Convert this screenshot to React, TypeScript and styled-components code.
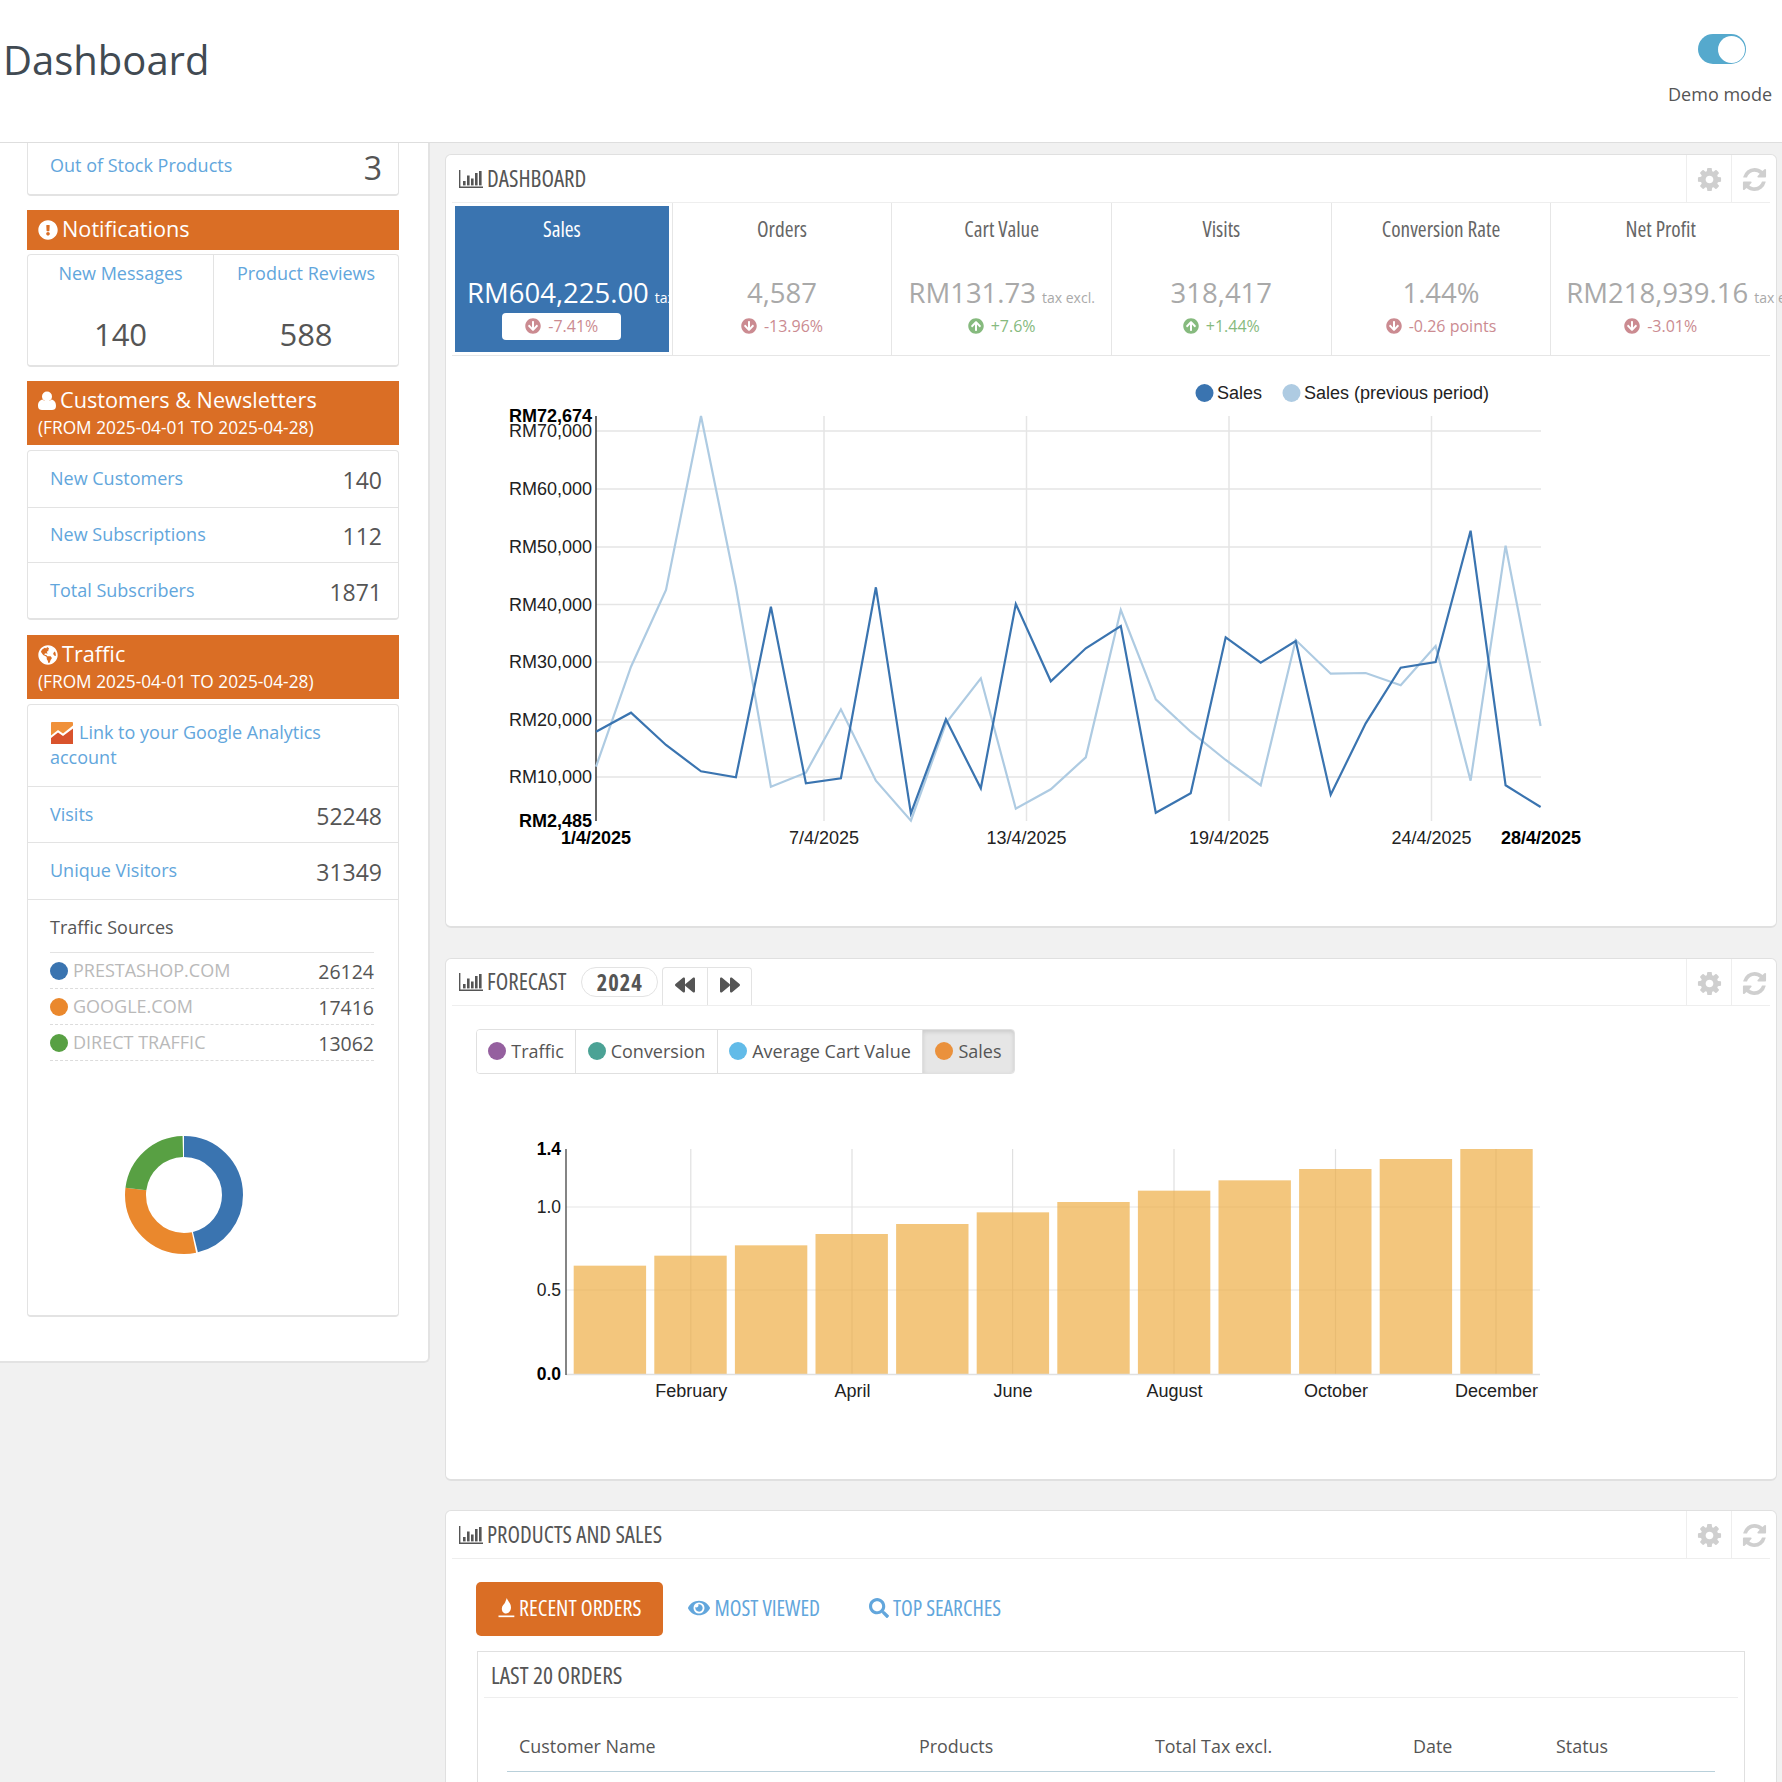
import React from 'react';
import styled, { createGlobalStyle } from 'styled-components';
import {
  FaArrowCircleDown,
  FaArrowCircleUp,
  FaBackward,
  FaExclamationCircle,
  FaEye,
  FaForward,
  FaGlobeAmericas,
  FaSearch,
} from 'react-icons/fa';

const orange = '#da6e25';
const link = '#62a6dc';
const sans = '"Open Sans", "Liberation Sans", sans-serif';
const arial = '"Liberation Sans", Arial, sans-serif';

const GlobalStyle = createGlobalStyle`
  html, body {
    margin: 0;
    padding: 0;
    height: 1782px;
    overflow: hidden;
    background: #f1f1f1;
    font-family: ${sans};
    color: #555;
  }
  * { box-sizing: border-box; }
`;

const Page = styled.div`
  width: 1782px;
  height: 1782px;
  overflow: hidden;
  display: flex;
  flex-direction: column;
`;

const Header = styled.header`
  height: 143px;
  flex: none;
  background: #fff;
  border-bottom: 1px solid #dedede;
  display: flex;
  justify-content: space-between;
  padding: 0 10px 0 3px;
`;

const Title = styled.h1`
  margin: 36px 0 0;
  font-size: 40px;
  font-weight: 400;
  line-height: 48px;
  color: #414a52;
`;

const DemoBox = styled.div`
  padding-top: 34px;
  display: flex;
  flex-direction: column;
  align-items: center;
`;

const Toggle = styled.div`
  width: 48px;
  height: 30px;
  margin-left: 4px;
  border-radius: 15px;
  background: #55a9cd;
  display: flex;
  justify-content: flex-end;
  align-items: center;
  padding-right: 1px;
  &::after {
    content: '';
    width: 27px;
    height: 27px;
    border-radius: 50%;
    background: #fff;
  }
`;

const DemoLabel = styled.div`
  margin-top: 18px;
  font-size: 18px;
  line-height: 24px;
  color: #555;
`;

const Body = styled.div`
  flex: 1;
  display: flex;
  align-items: flex-start;
  min-height: 0;
`;

const Sidebar = styled.aside`
  width: 430px;
  flex: none;
  background: #fff;
  border-right: 2px solid #e3e3e3;
  border-bottom: 2px solid #e3e3e3;
  border-bottom-right-radius: 6px;
  padding: 0 29px 44px 27px;
`;

const Card = styled.div`
  background: #fff;
  border: 1px solid #e3e3e3;
  border-bottom-width: 2px;
  border-radius: 4px;
`;

const TopCard = styled(Card)`
  border-top: 0;
  border-top-left-radius: 0;
  border-top-right-radius: 0;
  padding-bottom: 5px;
`;

const Row = styled.div<{ $h: number }>`
  height: ${p => p.$h}px;
  padding: 2px 16px 0 22px;
  display: flex;
  justify-content: space-between;
  align-items: center;
  & + & {
    border-top: 1px solid #e3e3e3;
  }
`;

const RowLink = styled.a`
  font-size: 18px;
  color: ${link};
  margin-top: -4px;
`;

const RowValue = styled.span<{ $big?: boolean }>`
  font-size: ${p => (p.$big ? 32 : 23)}px;
  color: #555;
`;

const Banner = styled.div<{ $gapTop: number; $gapBottom: number }>`
  margin-top: ${p => p.$gapTop}px;
  margin-bottom: ${p => p.$gapBottom}px;
  background: ${orange};
  color: #fff;
  padding: 0 11px;
  min-height: 40px;
  font-size: 21.7px;
  line-height: 37px;
  display: flow-root;
  svg {
    width: 20px;
    height: 20px;
    vertical-align: -3px;
    margin-right: 4px;
  }
`;

const UserGlyph = styled.svg`
  && {
    width: 18px;
    margin-right: 4px;
  }
`;

const BannerSub = styled.div`
  margin-top: -2px;
  font-size: 17.3px;
  line-height: 24px;
  padding-bottom: 5px;
`;

const Split = styled.div`
  display: grid;
  grid-template-columns: 1fr 1fr;
  height: 110px;
`;

const SplitCell = styled.div`
  text-align: center;
  & + & {
    border-left: 1px solid #e3e3e3;
  }
`;

const SplitLabel = styled.div`
  margin-top: 6px;
  font-size: 18px;
  line-height: 24px;
  color: ${link};
`;

const SplitValue = styled.div`
  margin-top: 27px;
  font-size: 31px;
  line-height: 44px;
  color: #555;
`;

const AnalyticsRow = styled.div`
  padding: 15px 22px 0;
  height: 82px;
  border-bottom: 1px solid #e3e3e3;
  font-size: 18px;
  line-height: 25px;
  color: ${link};
  svg {
    vertical-align: -5px;
    margin: 0 6px 0 1px;
  }
`;

const Sources = styled.div`
  padding: 15px 24px 0 22px;
  border-top: 1px solid #e3e3e3;
`;

const SourcesTitle = styled.div`
  font-size: 18px;
  line-height: 24px;
  padding-bottom: 13px;
  color: #555;
  border-bottom: 1px solid #e3e3e3;
`;

const Source = styled.div`
  height: 36px;
  display: flex;
  align-items: center;
  border-bottom: 1px dashed #dcdcdc;
`;

const Dot = styled.span<{ $c: string }>`
  width: 18px;
  height: 18px;
  flex: none;
  border-radius: 50%;
  background: ${p => p.$c};
`;

const SourceName = styled.span`
  margin: -2px 0 0 5px;
  font-size: 18px;
  color: #b9b9b9;
  flex: 1;
`;

const SourceValue = styled.span`
  font-size: 19.5px;
  color: #555;
  padding-top: 2px;
`;

const Donut = styled.svg`
  display: block;
  margin: 74px 0 60px 74px;
`;

const Main = styled.main`
  flex: 1;
  min-width: 0;
  padding: 11px 5px 0 15px;
  display: flex;
  flex-direction: column;
`;

const Panel = styled.section<{ $h: number; $mb: number }>`
  flex: none;
  height: ${p => p.$h}px;
  margin-bottom: ${p => p.$mb}px;
  background: #fff;
  border: 1px solid #e0e0e0;
  border-bottom-width: 2px;
  border-radius: 6px;
  padding: 0 6px;
`;

const PanelHead = styled.div<{ $h: number }>`
  height: ${p => p.$h}px;
  border-bottom: 1px solid #eee;
  display: flex;
  align-items: stretch;
  justify-content: space-between;
`;

const HeadLeft = styled.div`
  display: flex;
  align-items: center;
  padding-left: 7px;
`;

// the reference uses a condensed face; Open Sans narrowed by its width axis stands in
const Cond = styled.span<{ $size?: number; $w?: number }>`
  font-family: ${sans};
  font-size: ${p => p.$size ?? 23}px;
  font-stretch: 75%;
  font-weight: ${p => p.$w ?? 400};
`;

const PanelTitle = styled(Cond)`
  margin: -2px 0 0 4px;
  color: #555;
  text-transform: uppercase;
`;

const YearPill = styled(Cond)`
  margin-left: 15px;
  width: 77px;
  height: 30px;
  border: 1px solid #e3e3e3;
  border-radius: 15px;
  display: flex;
  align-items: center;
  justify-content: center;
  color: #555;
  letter-spacing: 1px;
`;

const NavGroup = styled.div`
  margin-left: 4px;
  align-self: flex-end;
  width: 90px;
  height: 38px;
  border: 1px solid #e3e3e3;
  border-bottom: 0;
  border-radius: 4px 4px 0 0;
  display: grid;
  grid-template-columns: 1fr 1fr;
  color: #555;
  div {
    display: flex;
    align-items: center;
    justify-content: center;
    padding-bottom: 4px;
  }
  div + div {
    border-left: 1px solid #e3e3e3;
  }
  svg {
    width: 20px;
    height: 20px;
  }
`;

const HeadActions = styled.div`
  display: flex;
  margin-right: -6px;
`;

const Action = styled.div`
  width: 45px;
  display: flex;
  align-items: center;
  justify-content: center;
  padding-top: 2px;
  border-left: 1px solid #eee;
  svg {
    width: 27px;
    height: 27px;
    fill: #cfcfcf;
  }
`;

const KpiRow = styled.div`
  display: grid;
  grid-template-columns: repeat(6, minmax(0, 1fr));
  height: 153px;
  border-bottom: 1px solid #e6e6e6;
`;

const KpiCell = styled.div`
  padding: 3px;
  & + & {
    border-left: 1px solid #e6e6e6;
  }
`;

const KpiInner = styled.div<{ $active?: boolean }>`
  height: 146px;
  padding: 0 12px;
  text-align: center;
  white-space: nowrap;
  background: ${p => (p.$active ? '#3a74b0' : 'transparent')};
  color: ${p => (p.$active ? '#fff' : '#a9a9a9')};
`;

const KpiLabel = styled(Cond)<{ $active?: boolean }>`
  display: block;
  line-height: 46px;
  color: ${p => (p.$active ? '#fff' : '#666')};
`;

const KpiValue = styled.div`
  margin-top: 21px;
  height: 40px;
  font-size: 27.5px;
  line-height: 40px;
  small {
    margin-left: 6px;
    font-size: 14px;
    line-height: 1;
  }
`;

const Trend = styled.div<{ $up: boolean; $pill?: boolean }>`
  display: flex;
  align-items: center;
  justify-content: center;
  gap: 7px;
  height: 27px;
  padding-bottom: 2px;
  width: ${p => (p.$pill ? '119px' : 'auto')};
  margin: 0 auto;
  border-radius: 4px;
  background: ${p => (p.$pill ? '#fff' : 'transparent')};
  font-size: 16px;
  color: ${p => (p.$up ? '#86ba7e' : '#cb8b91')};
  svg {
    width: 16px;
    height: 16px;
  }
`;

const ChartSvg = styled.svg`
  display: block;
  margin-left: -6px;
  font-family: ${arial};
  font-size: 18px;
  fill: #222;
`;

const MetricTabs = styled.div`
  margin: 23px 0 0 24px;
  display: inline-flex;
  height: 45px;
  border: 1px solid #e0e0e0;
  border-radius: 4px;
  overflow: hidden;
`;

const MetricTab = styled.div<{ $active?: boolean; $w: number }>`
  width: ${p => p.$w}px;
  display: flex;
  align-items: center;
  justify-content: center;
  gap: 5px;
  padding-bottom: 2px;
  font-size: 18px;
  color: #555;
  background: ${p => (p.$active ? '#e6e6e6' : '#fff')};
  box-shadow: ${p => (p.$active ? 'inset 0 2px 4px rgba(0,0,0,.12)' : 'none')};
  & + & {
    border-left: 1px solid #e0e0e0;
  }
`;

const SalesTabs = styled.div`
  margin: 23px 0 0 24px;
  display: flex;
  align-items: center;
  height: 54px;
`;

const SalesTab = styled.a<{ $active?: boolean }>`
  height: 54px;
  display: flex;
  align-items: center;
  gap: ${p => (p.$active ? 3 : 4)}px;
  padding: ${p => (p.$active ? '0 22px 0 20px' : '0')};
  margin-right: ${p => (p.$active ? 25 : 49)}px;
  border-radius: 5px;
  background: ${p => (p.$active ? orange : 'transparent')};
  color: ${p => (p.$active ? '#fff' : link)};
  svg {
    height: 20px;
    margin-top: -2px;
  }
`;

const TabGlyph = styled.span<{ $w: number }>`
  display: inline-flex;
  svg {
    width: ${p => p.$w}px;
    height: ${p => p.$w}px;
  }
`;

const SalesTabLabel = styled(Cond)`
  margin-top: -3px;
`;

const OrdersCard = styled.div`
  margin: 15px 25px 0;
  height: 400px;
  border: 1px solid #e0e0e0;
  padding: 0 6px;
`;

const OrdersTitle = styled(Cond)`
  display: block;
  height: 46px;
  line-height: 46px;
  padding-left: 7px;
  border-bottom: 1px solid #eee;
  color: #555;
`;

const OrdersHead = styled.div`
  margin: 29px 23px 0;
  height: 45px;
  display: grid;
  grid-template-columns: 400px 236px 258px 143px 1fr;
  padding-left: 12px;
  border-bottom: 1px solid #b9d0da;
  font-size: 17.9px;
  line-height: 38px;
  color: #555;
`;

const ChartIcon = () => (
  <svg width="24" height="18" viewBox="0 0 24 18" fill="#555">
    <path d="M0 0h1.4v16.4H24V18H0z" />
    <rect x="4" y="11" width="2.6" height="4.4" />
    <rect x="8" y="5.5" width="2.6" height="9.9" />
    <rect x="12" y="8.5" width="2.6" height="6.9" />
    <rect x="16" y="3" width="2.6" height="12.4" />
    <rect x="20" y="1" width="2.6" height="14.4" />
  </svg>
);

const GearIcon = () => (
  <svg viewBox="0 0 1792 1792">
    <path d="M1152 896q0-106-75-181t-181-75-181 75-75 181 75 181 181 75 181-75 75-181zm512-109v222q0 12-8 23t-20 13l-185 28q-19 54-39 91 35 50 107 138 10 12 10 25t-9 23q-27 37-99 108t-94 71q-12 0-26-9l-138-108q-44 23-91 38-16 136-29 186-7 28-36 28h-222q-14 0-24.500-8.500t-11.500-21.500l-28-184q-49-16-90-37l-141 107q-10 9-25 9-14 0-25-11-126-114-165-168-7-10-7-23 0-12 8-23 15-21 51-66.500t54-70.500q-27-50-41-99l-183-27q-13-2-21-12.500t-8-23.500v-222q0-12 8-23t19-13l186-28q14-46 39-92-40-57-107-138-10-12-10-24 0-10 9-23 26-36 98.500-107.500t94.500-71.500q13 0 26 10l138 107q44-23 91-38 16-136 29-186 7-28 36-28h222q14 0 24.500 8.500t11.500 21.500l28 184q49 16 90 37l142-107q9-9 24-9 13 0 25 10 129 119 165 170 7 8 7 22 0 12-8 23-15 21-51 66.500t-54 70.500q26 50 41 98l183 28q13 2 21 12.500t8 23.500z" />
  </svg>
);

const RefreshIcon = () => (
  <svg viewBox="0 0 1792 1792">
    <path d="M1639 1056q0 5-1 7-64 268-268 434.500t-478 166.500q-146 0-282.500-55t-243.500-157l-129 129q-19 19-45 19t-45-19-19-45v-448q0-26 19-45t45-19h448q26 0 45 19t19 45-19 45l-137 137q71 66 161 102t187 36q134 0 250-65t186-179q11-17 53-117 8-23 30-23h192q13 0 22.500 9.500t9.500 22.500zm25-800v448q0 26-19 45t-45 19h-448q-26 0-45-19t-19-45 19-45l138-138q-148-137-349-137-134 0-250 65t-186 179q-11 17-53 117-8 23-30 23h-199q-13 0-22.500-9.500t-9.500-22.500v-7q65-268 270-434.500t480-166.500q146 0 284 55.500t245 156.500l130-129q19-19 45-19t45 19 19 45z" />
  </svg>
);

const AnalyticsIcon = () => (
  <svg width="22" height="22" viewBox="0 0 22 22">
    <rect width="22" height="22" rx="1" fill="#f0913a" />
    <path d="M0 22V15L7 10l5 3.5L22 6v16z" fill="#d9532c" />
    <path d="M0 13.5 7 8l5 3.5L22 3.5v3L12 14 7 10.5 0 16z" fill="#fff" />
  </svg>
);

const FireIcon = () => (
  <svg viewBox="0 0 22 24" fill="#fff">
    <path d="M12 0c1 4 5 6 5 11.500 0 4-2.500 7-6 7s-5-3-5-6c0-3.500 3-5 4-7.500.6-1.700 1.200-3 2-5z" />
    <rect x="2" y="21" width="19" height="2" />
  </svg>
);

const kpis = [
  { label: 'Sales', value: 'RM604,225.00', tax: true, trend: '-7.41%', up: false, active: true },
  { label: 'Orders', value: '4,587', trend: '-13.96%', up: false },
  { label: 'Cart Value', value: 'RM131.73', tax: true, trend: '+7.6%', up: true },
  { label: 'Visits', value: '318,417', trend: '+1.44%', up: true },
  { label: 'Conversion Rate', value: '1.44%', trend: '-0.26 points', up: false },
  { label: 'Net Profit', value: 'RM218,939.16', tax: true, trend: '-3.01%', up: false },
];

const sources = [
  { name: 'PRESTASHOP.COM', value: 26124, color: '#3a74b0' },
  { name: 'GOOGLE.COM', value: 17416, color: '#ea882d' },
  { name: 'DIRECT TRAFFIC', value: 13062, color: '#58a043' },
];

// y positions measured off the reference, one per day
const salesY = [1085, 1028, 1125, 1204, 1222, 710, 1240, 1225, 652, 1330, 1048, 1255, 702, 934, 835, 768, 1328, 1270, 802, 878, 813, 1274, 1060, 893, 876, 482, 1246, 1311];
const prevY = [1190, 890, 660, 138, 650, 1250, 1208, 1018, 1232, 1352, 1060, 925, 1316, 1258, 1162, 720, 988, 1085, 1170, 1246, 810, 911, 909, 946, 828, 1232, 527, 1068];
const toPoints = (ys: number[]) =>
  ys.map((y, i) => `${(596 + i * 34.985).toFixed(1)},${(370 + y / 3).toFixed(1)}`).join(' ');

const yTicks = [
  { y: 431, t: 'RM70,000' },
  { y: 489, t: 'RM60,000' },
  { y: 547, t: 'RM50,000' },
  { y: 604.5, t: 'RM40,000' },
  { y: 662, t: 'RM30,000' },
  { y: 720, t: 'RM20,000' },
  { y: 777, t: 'RM10,000' },
];
const xTicks = [
  { x: 824, t: '7/4/2025' },
  { x: 1026.5, t: '13/4/2025' },
  { x: 1229, t: '19/4/2025' },
  { x: 1431.5, t: '24/4/2025' },
];

const SalesChart = () => (
  <ChartSvg width="1330" height="569" viewBox="446 356 1330 569">
    {yTicks.map(k => (
      <g key={k.t}>
        <line x1="596" x2="1541" y1={k.y} y2={k.y} stroke="#e5e5e5" strokeWidth="1.5" />
        <text x="592" y={k.y + 6} textAnchor="end">{k.t}</text>
      </g>
    ))}
    {xTicks.map(k => (
      <g key={k.t}>
        <line x1={k.x} x2={k.x} y1="416" y2="821" stroke="#e5e5e5" strokeWidth="1.5" />
        <text x={k.x} y="844" textAnchor="middle">{k.t}</text>
      </g>
    ))}
    <line x1="596" x2="596" y1="416" y2="821" stroke="#333" strokeWidth="1.5" />
    <polyline points={toPoints(prevY)} fill="none" stroke="#aecbe2" strokeWidth="2.2" />
    <polyline points={toPoints(salesY)} fill="none" stroke="#3a74b0" strokeWidth="2.2" />
    <text x="592" y="422" textAnchor="end" fontWeight="700" fill="#000">RM72,674</text>
    <text x="592" y="827" textAnchor="end" fontWeight="700" fill="#000">RM2,485</text>
    <text x="596" y="844" textAnchor="middle" fontWeight="700" fill="#000">1/4/2025</text>
    <text x="1541" y="844" textAnchor="middle" fontWeight="700" fill="#000">28/4/2025</text>
    <circle cx="1204.500" cy="393" r="9" fill="#3a74b0" />
    <text x="1217" y="399">Sales</text>
    <circle cx="1291.500" cy="393" r="9" fill="#aecbe2" />
    <text x="1304" y="399">Sales (previous period)</text>
  </ChartSvg>
);

const barTops = [437, 407, 376, 342, 312, 277, 246, 212, 181, 147, 117, 87];
const months = [
  { x: 690.8, t: 'February' },
  { x: 852, t: 'April' },
  { x: 1012.6, t: 'June' },
  { x: 1174, t: 'August' },
  { x: 1335.5, t: 'October' },
  { x: 1496, t: 'December' },
];

const ForecastChart = () => (
  <ChartSvg width="1330" height="400" viewBox="446 1074 1330 400">
    {[1207, 1290].map(y => (
      <line key={y} x1="566" x2="1540" y1={y} y2={y} stroke="#e5e5e5" strokeWidth="1.2" />
    ))}
    {months.map(m => (
      <g key={m.t}>
        <line x1={m.x} x2={m.x} y1="1149" y2="1374" stroke="#e0e0e0" strokeWidth="1.2" />
        <text x={m.x + 0.5} y="1397" textAnchor="middle">{m.t}</text>
      </g>
    ))}
    {barTops.map((t, i) => {
      const top = 1120 + t / 3;
      return <rect key={i} x={573.7 + i * 80.6} y={top} width="72.400" height={1374 - top} fill="#eda83a" fillOpacity="0.66" />;
    })}
    <line x1="566" x2="1540" y1="1374.500" y2="1374.500" stroke="#e0e0e0" strokeWidth="1.500" />
    <line x1="566" x2="566" y1="1149" y2="1375" stroke="#333" strokeWidth="1.200" />
    <text x="561" y="1155" textAnchor="end" fontSize="17.500" fontWeight="700" fill="#000">1.4</text>
    <text x="561" y="1213" textAnchor="end" fontSize="17.500">1.0</text>
    <text x="561" y="1296" textAnchor="end" fontSize="17.500">0.5</text>
    <text x="561" y="1380" textAnchor="end" fontSize="17.500" fontWeight="700" fill="#000">0.0</text>
  </ChartSvg>
);

const PanelHeader: React.FC<{ title: string; h: number; children?: React.ReactNode }> = ({ title, h, children }) => (
  <PanelHead $h={h}>
    <HeadLeft>
      <ChartIcon />
      <PanelTitle>{title}</PanelTitle>
      {children}
    </HeadLeft>
    <HeadActions>
      <Action><GearIcon /></Action>
      <Action><RefreshIcon /></Action>
    </HeadActions>
  </PanelHead>
);

const App: React.FC = () => (
  <Page>
    <GlobalStyle />
    <Header>
      <Title>Dashboard</Title>
      <DemoBox>
        <Toggle />
        <DemoLabel>Demo mode</DemoLabel>
      </DemoBox>
    </Header>
    <Body>
      <Sidebar>
        <TopCard>
          <Row $h={46}>
            <RowLink>Out of Stock Products</RowLink>
            <RowValue $big>3</RowValue>
          </Row>
        </TopCard>
        <Banner $gapTop={14} $gapBottom={4}>
          <FaExclamationCircle />Notifications
        </Banner>
        <Card>
          <Split>
            <SplitCell>
              <SplitLabel>New Messages</SplitLabel>
              <SplitValue>140</SplitValue>
            </SplitCell>
            <SplitCell>
              <SplitLabel>Product Reviews</SplitLabel>
              <SplitValue>588</SplitValue>
            </SplitCell>
          </Split>
        </Card>
        <Banner $gapTop={14} $gapBottom={5}>
          <UserGlyph viewBox="0 0 18 20" fill="#fff">
            <circle cx="9" cy="5.5" r="5" />
            <path d="M0 15c0-4 2-6 4.500-6.500 1.200 1 2.800 1.600 4.500 1.600s3.300-.6 4.500-1.600C16 9 18 11 18 15c0 3-2 4-4 4H4c-2 0-4-1-4-4z" />
          </UserGlyph>
          Customers &amp; Newsletters
          <BannerSub>(FROM 2025-04-01 TO 2025-04-28)</BannerSub>
        </Banner>
        <Card>
          <Row $h={56}><RowLink>New Customers</RowLink><RowValue>140</RowValue></Row>
          <Row $h={55}><RowLink>New Subscriptions</RowLink><RowValue>112</RowValue></Row>
          <Row $h={56}><RowLink>Total Subscribers</RowLink><RowValue>1871</RowValue></Row>
        </Card>
        <Banner $gapTop={15} $gapBottom={5}>
          <FaGlobeAmericas />Traffic
          <BannerSub>(FROM 2025-04-01 TO 2025-04-28)</BannerSub>
        </Banner>
        <Card>
          <AnalyticsRow>
            <AnalyticsIcon />
            Link to your Google Analytics account
          </AnalyticsRow>
          <Row $h={55}><RowLink>Visits</RowLink><RowValue>52248</RowValue></Row>
          <Row $h={57}><RowLink>Unique Visitors</RowLink><RowValue>31349</RowValue></Row>
          <Sources>
            <SourcesTitle>Traffic Sources</SourcesTitle>
            {sources.map(s => (
              <Source key={s.name}>
                <Dot $c={s.color} />
                <SourceName>{s.name}</SourceName>
                <SourceValue>{s.value}</SourceValue>
              </Source>
            ))}
            <Donut width="120" height="120" viewBox="0 0 120 120">
              <g transform="rotate(-90 60 60)" fill="none" strokeWidth="21">
                <circle cx="60" cy="60" r="48.5" pathLength={100} stroke="#3a74b0" strokeDasharray="46.2 53.8" />
                <circle cx="60" cy="60" r="48.5" pathLength={100} stroke="#ea882d" strokeDasharray="30.3 69.7" strokeDashoffset="-46.700" />
                <circle cx="60" cy="60" r="48.5" pathLength={100} stroke="#58a043" strokeDasharray="22.6 77.4" strokeDashoffset="-77" />
              </g>
            </Donut>
          </Sources>
        </Card>
      </Sidebar>
      <Main>
        <Panel $h={774} $mb={30}>
          <PanelHeader title="Dashboard" h={48} />
          <KpiRow>
            {kpis.map(k => (
              <KpiCell key={k.label}>
                <KpiInner $active={k.active}>
                  <KpiLabel $size={21.3} $w={500} $active={k.active}>{k.label}</KpiLabel>
                  <KpiValue>
                    {k.value}
                    {k.tax && <small>tax excl.</small>}
                  </KpiValue>
                  <Trend $up={k.up} $pill={k.active}>
                    {k.up ? <FaArrowCircleUp /> : <FaArrowCircleDown />}
                    {k.trend}
                  </Trend>
                </KpiInner>
              </KpiCell>
            ))}
          </KpiRow>
          <SalesChart />
        </Panel>
        <Panel $h={523} $mb={29}>
          <PanelHeader title="Forecast" h={47}>
            <YearPill $size={22.5} $w={700}>2024</YearPill>
            <NavGroup>
              <div><FaBackward /></div>
              <div><FaForward /></div>
            </NavGroup>
          </PanelHeader>
          <MetricTabs>
            <MetricTab $w={98}><Dot $c="#95609f" />Traffic</MetricTab>
            <MetricTab $w={142}><Dot $c="#4ba295" />Conversion</MetricTab>
            <MetricTab $w={205}><Dot $c="#62bbe8" />Average Cart Value</MetricTab>
            <MetricTab $w={92} $active><Dot $c="#ea913c" />Sales</MetricTab>
          </MetricTabs>
          <ForecastChart />
        </Panel>
        <Panel $h={400} $mb={0}>
          <PanelHeader title="Products and Sales" h={48} />
          <SalesTabs>
            <SalesTab $active><TabGlyph $w={20}><FireIcon /></TabGlyph><SalesTabLabel $size={21.9} $w={500}>RECENT ORDERS</SalesTabLabel></SalesTab>
            <SalesTab><TabGlyph $w={22}><FaEye /></TabGlyph><SalesTabLabel $size={21.5} $w={500}>MOST VIEWED</SalesTabLabel></SalesTab>
            <SalesTab><TabGlyph $w={20}><FaSearch /></TabGlyph><SalesTabLabel $size={21.5} $w={500}>TOP SEARCHES</SalesTabLabel></SalesTab>
          </SalesTabs>
          <OrdersCard>
            <OrdersTitle $size={23.5}>LAST 20 ORDERS</OrdersTitle>
            <OrdersHead>
              <span>Customer Name</span>
              <span>Products</span>
              <span>Total Tax excl.</span>
              <span>Date</span>
              <span>Status</span>
            </OrdersHead>
          </OrdersCard>
        </Panel>
      </Main>
    </Body>
  </Page>
);

export default App;
